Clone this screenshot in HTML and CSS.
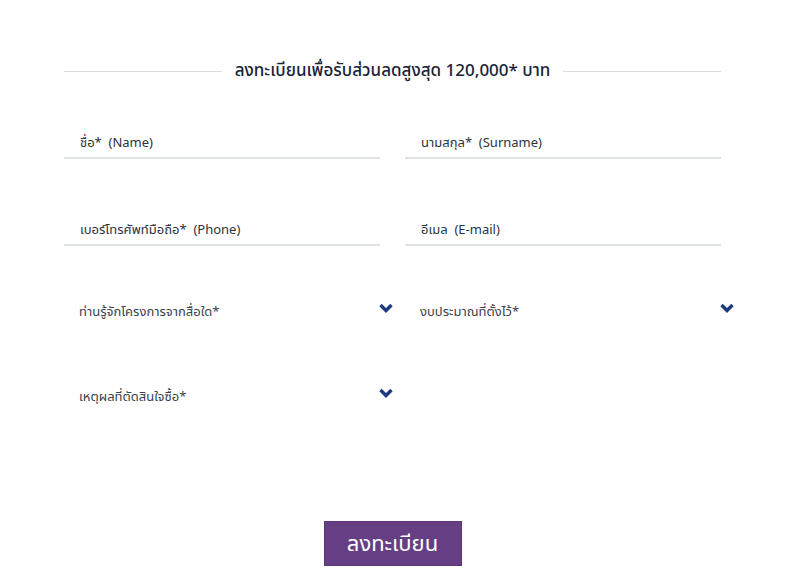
FILE: index.html
```html
<!DOCTYPE html>
<html lang="th">

<head>
    <meta charset="UTF-8">
    <title>ลงทะเบียน</title>
    <link rel="stylesheet" href="styles.css">
</head>

<body>
    <div class="container">
        <div class="title">
            <span class="line"></span>
            <h2>ลงทะเบียนเพื่อรับส่วนลดสูงสุด 120,000* บาท</h2>
            <span class="line"></span>
        </div>
        <form class="form">
            <div class="field">
                <input type="text" placeholder="ชื่อ*  (Name)">
            </div>
            <div class="field">
                <input type="text" placeholder="นามสกุล*  (Surname)">
            </div>
            <div class="field">
                <input type="text" placeholder="เบอร์โทรศัพท์มือถือ*  (Phone)">
            </div>
            <div class="field">
                <input type="text" placeholder="อีเมล  (E-mail)">
            </div>
            <div class="select">
                <span>ท่านรู้จักโครงการจากสื่อใด*</span>
                <svg viewBox="0 0 14 10" width="14" height="10"><path d="M1.5 2 L7 7.5 L12.5 2" fill="none" stroke="#1b3a80" stroke-width="3.4"/></svg>
            </div>
            <div class="select">
                <span>งบประมาณที่ตั้งไว้*</span>
                <svg viewBox="0 0 14 10" width="14" height="10"><path d="M1.5 2 L7 7.5 L12.5 2" fill="none" stroke="#1b3a80" stroke-width="3.4"/></svg>
            </div>
            <div class="select">
                <span>เหตุผลที่ตัดสินใจซื้อ*</span>
                <svg viewBox="0 0 14 10" width="14" height="10"><path d="M1.5 2 L7 7.5 L12.5 2" fill="none" stroke="#1b3a80" stroke-width="3.4"/></svg>
            </div>
        </form>
        <div class="actions">
            <button type="submit">ลงทะเบียน</button>
        </div>
    </div>
</body>

</html>
```
FILE: styles.css
```css
body {
    margin: 0;
    font-family: "Noto Sans", "Noto Sans Thai", "Noto Sans CJK SC", sans-serif;
    background: #fff;
    color: #2b3340;
}

.container {
    width: 657px;
    margin-left: 64px;
    padding-top: 58px;
}

.title {
    display: flex;
    align-items: center;
    gap: 13px;
}

.line {
    flex: 1;
    height: 1px;
    background: #d9dde2;
}

h2 {
    margin: 0;
    font-size: 17px;
    font-weight: 500;
    color: #1a2438;
}

.form {
    display: grid;
    grid-template-columns: 316px 316px;
    column-gap: 25px;
    margin-top: 37px;
}

.field {
    height: 87px;
}

.field input {
    width: 100%;
    box-sizing: border-box;
    border: none;
    border-bottom: 2px solid #dfe3e8;
    padding: 12px 16px 6px;
    font-family: inherit;
    font-size: 13px;
    color: #2b3340;
    outline: none;
}

.field input::placeholder {
    color: #2b3340;
}

.select {
    display: flex;
    align-items: flex-start;
    justify-content: space-between;
    width: 329px;
    height: 85px;
    box-sizing: border-box;
    padding: 7px 0 0 15px;
    font-size: 13px;
    color: #3a414d;
}

.select svg {
    margin-top: 1px;
}

.actions {
    display: flex;
    justify-content: center;
    margin-top: 56px;
}

button {
    width: 138px;
    height: 45px;
    background: #663e84;
    color: #fff;
    border: 1px solid #5a3577;
    font-family: inherit;
    font-size: 22px;
    cursor: pointer;
}
```
